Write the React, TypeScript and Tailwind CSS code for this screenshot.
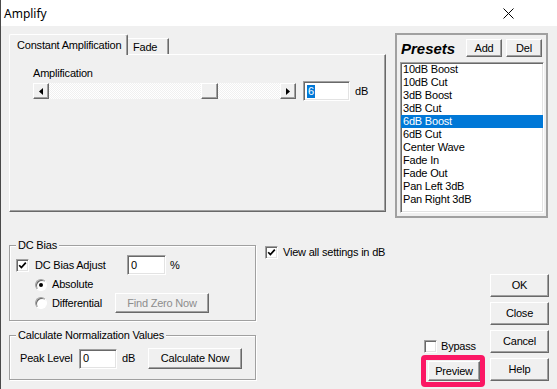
import React from 'react';

const raised =
  'bg-[#f0f0f0] border border-t-white border-l-white border-r-[#696969] border-b-[#696969] shadow-[inset_-1px_-1px_0_#a0a0a0] flex items-center justify-center';
const sunken =
  'bg-white border border-t-[#a0a0a0] border-l-[#a0a0a0] border-r-white border-b-white shadow-[inset_1px_1px_0_#696969,inset_-1px_-1px_0_#e3e3e3]';

const Check = ({ checked }: { checked?: boolean }) => (
  <div className={`w-[13px] h-[13px] shrink-0 flex items-center justify-center ${sunken}`}>
    {checked && (
      <svg width="9" height="9" viewBox="0 0 9 9">
        <polyline points="1.2,4.2 3.4,6.6 7.8,1.6" fill="none" stroke="#000" strokeWidth="1.7" />
      </svg>
    )}
  </div>
);

const Radio = ({ on }: { on?: boolean }) => (
  <div className="w-[12px] h-[12px] shrink-0 rounded-full bg-white border border-t-[#a0a0a0] border-l-[#a0a0a0] border-r-white border-b-white shadow-[inset_1px_1px_0_#696969] flex items-center justify-center">
    {on && <div className="w-[4px] h-[4px] rounded-full bg-black" />}
  </div>
);

const presets = [
  '10dB Boost',
  '10dB Cut',
  '3dB Boost',
  '3dB Cut',
  '6dB Boost',
  '6dB Cut',
  'Center Wave',
  'Fade In',
  'Fade Out',
  'Pan Left 3dB',
  'Pan Right 3dB',
];

export default function App() {
  return (
    <div className="w-[557px] h-[389px] bg-[#f0f0f0] font-['Liberation_Sans',Arial,sans-serif] text-[11px] leading-[13px] tracking-[-0.2px] text-black overflow-hidden border-l border-[#4a4a4a] flex flex-col">
      {/* title bar */}
      <div className="h-[26px] bg-white flex items-center justify-between shrink-0 pl-[3px] pr-[43px]">
        <span className="text-[12px] font-['Noto_Sans',sans-serif] tracking-normal">Amplify</span>
        <svg width="11" height="11" viewBox="0 0 11 11">
          <path d="M0.5 0.5L10.5 10.5M10.5 0.5L0.5 10.5" stroke="#000" strokeWidth="1" />
        </svg>
      </div>

      {/* top row */}
      <div className="flex items-start shrink-0">
        <div className="ml-[8px] mt-[8px] w-[377px] flex flex-col">
          <div className="flex items-end h-[21px] -mb-px relative z-10">
            <div className="w-[119px] h-[21px] bg-[#f0f0f0] border-t border-l border-white border-r border-r-[#696969] rounded-t-[2px] pl-[7px] pt-[4px] shadow-[inset_-1px_0_0_#a0a0a0]">
              Constant Amplification
            </div>
            <div className="w-[41px] h-[16px] mb-[1px] border-t border-white border-r border-r-[#696969] shadow-[inset_-1px_0_0_#a0a0a0] pl-[5px] pt-[2px]">
              Fade
            </div>
          </div>
          <div className="h-[158px] border border-t-white border-l-white border-r-[#696969] border-b-[#696969] shadow-[inset_-1px_-1px_0_#a0a0a0] pl-[23px] pt-[12px]">
            <div>Amplification</div>
            <div className="mt-[1px] h-[20px] flex items-center">
              <div className="w-[263px] h-[16px] flex">
                <div className={`w-[16px] h-[16px] ${raised}`}>
                  <svg width="4" height="7" viewBox="0 0 4 7">
                    <path d="M4 0L0 3.5L4 7Z" fill="#000" />
                  </svg>
                </div>
                <div className="flex-1 h-[16px] flex bg-[repeating-conic-gradient(#ffffff_0_25%,#f0f0f0_0_50%)] bg-[length:2px_2px]">
                  <div className={`ml-[152px] w-[17px] h-[16px] ${raised}`} />
                </div>
                <div className={`w-[16px] h-[16px] ${raised}`}>
                  <svg width="4" height="7" viewBox="0 0 4 7">
                    <path d="M0 0L4 3.5L0 7Z" fill="#000" />
                  </svg>
                </div>
              </div>
              <div className={`ml-[7px] w-[47px] h-[20px] flex items-center pl-[3px] ${sunken}`}>
                <span className="bg-[#0078d7] text-white px-px">6</span>
              </div>
              <span className="ml-[5px]">dB</span>
            </div>
          </div>
        </div>

        <div className="ml-[9px] mt-[7px] w-[153px] h-[185px] border-2 border-[#a0a0a0] flex flex-col px-[3px] pt-[4px]">
          <div className="flex items-center h-[18px]">
            <span className="w-[66px] pl-[1px] text-[15px] font-bold italic tracking-normal">Presets</span>
            <div className={`w-[36px] h-[18px] ${raised}`}>Add</div>
            <div className={`ml-[4px] w-[36px] h-[18px] ${raised}`}>Del</div>
          </div>
          <div className={`mt-[5px] w-[144px] h-[151px] ${sunken}`}>
            {presets.map((p) => (
              <div
                key={p}
                className={`h-[13px] leading-[13px] pl-[2px] ${p === '6dB Boost' ? 'bg-[#0078d7] text-white' : ''}`}
              >
                {p}
              </div>
            ))}
          </div>
        </div>
      </div>

      {/* bottom row */}
      <div className="flex items-start">
        <div className="ml-[8px] w-[247px] flex flex-col">
          <fieldset className="mt-[21px] h-[82px] border border-[#a0a0a0] shadow-[inset_1px_1px_0_#fff,1px_1px_0_#fff]">
            <legend className="ml-[6px] px-[2px] bg-[#f0f0f0]">DC Bias</legend>
            <div className="mt-[3px] pl-[6px] h-[20px] flex items-center">
              <Check checked />
              <span className="ml-[6px] w-[92px]">DC Bias Adjust</span>
              <div className={`w-[39px] h-[20px] flex items-center pl-[3px] ${sunken}`}>0</div>
              <span className="ml-[4px]">%</span>
            </div>
            <div className="mt-[3px] pl-[25px] h-[13px] flex items-center">
              <Radio on />
              <span className="ml-[5px]">Absolute</span>
            </div>
            <div className="mt-[2px] pl-[25px] h-[20px] flex items-center">
              <Radio />
              <span className="ml-[5px] w-[63px]">Differential</span>
              <div className={`w-[94px] h-[20px] text-[#8d8d8d] ${raised}`}>Find Zero Now</div>
            </div>
          </fieldset>

          <fieldset className="mt-[8px] h-[51px] border border-[#a0a0a0] shadow-[inset_1px_1px_0_#fff,1px_1px_0_#fff]">
            <legend className="ml-[6px] px-[2px] bg-[#f0f0f0]">Calculate Normalization Values</legend>
            <div className="mt-[6px] pl-[10px] h-[21px] flex items-center">
              <span className="w-[59px]">Peak Level</span>
              <div className={`w-[38px] h-[20px] flex items-center pl-[3px] ${sunken}`}>0</div>
              <span className="ml-[5px] w-[26px]">dB</span>
              <div className={`w-[94px] h-[21px] ${raised}`}>Calculate Now</div>
            </div>
          </fieldset>
        </div>

        <div className="ml-[9px] mt-[28px] flex-1 flex items-center">
          <Check checked />
          <span className="ml-[5px]">View all settings in dB</span>
        </div>

        <div className="mt-[122px] w-[56px] flex flex-col">
          <div className="h-[13px] flex items-center">
            <Check />
            <span className="ml-[4px]">Bypass</span>
          </div>
          <div className={`relative mt-[8px] ml-[4px] w-[52px] h-[20px] ${raised}`}>
            Preview
            <div className="absolute -left-[8px] -right-[6px] -top-[7px] -bottom-[7px] border-[5px] border-[#fb1764] rounded-[4px]" />
          </div>
        </div>

        <div className="ml-[10px] mr-[8px] mt-[56px] w-[59px] flex flex-col gap-[5px]">
          {['OK', 'Close', 'Cancel', 'Help'].map((b) => (
            <div key={b} className={`h-[23px] ${raised}`}>
              {b}
            </div>
          ))}
        </div>
      </div>
    </div>
  );
}
